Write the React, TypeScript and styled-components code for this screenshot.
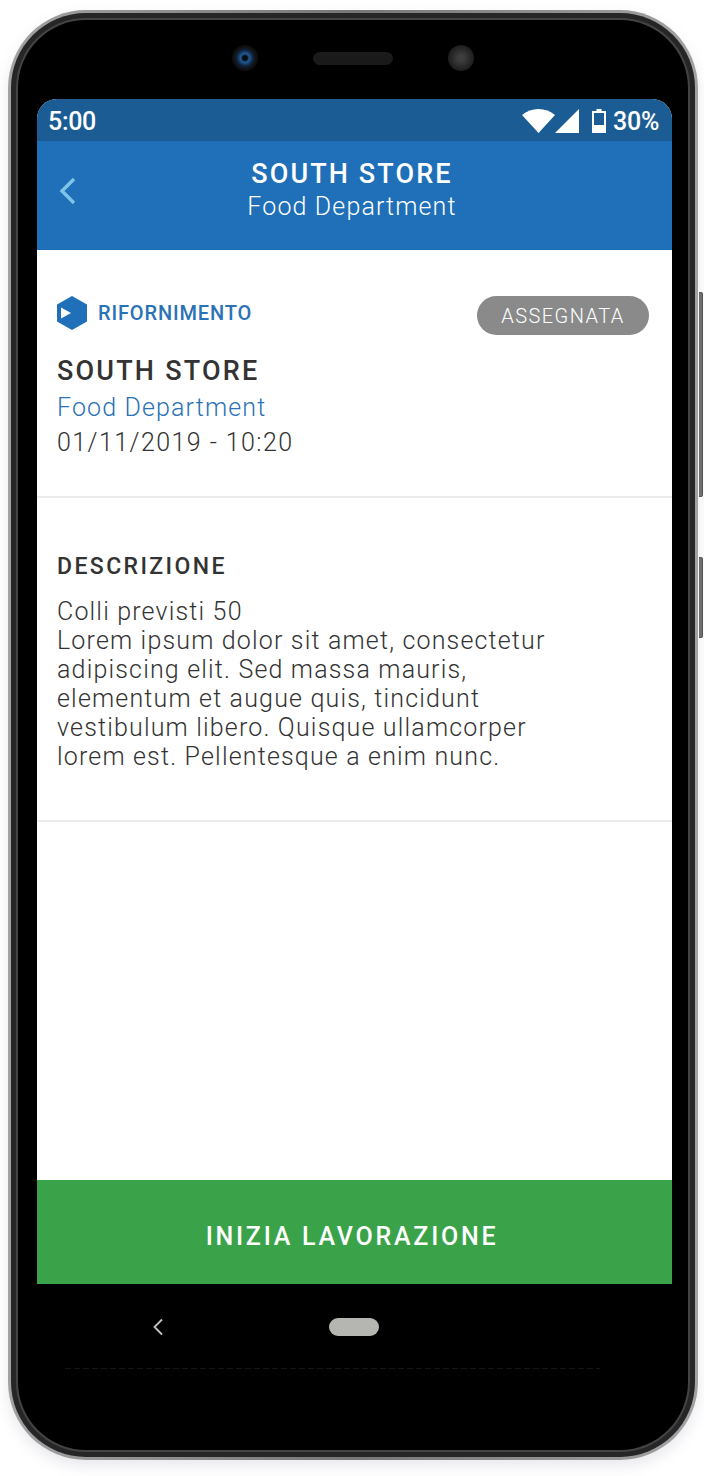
import React from "react";
import styled, { createGlobalStyle } from "styled-components";

const GlobalStyle = createGlobalStyle`
	html, body {
		margin: 0;
		padding: 0;
		background: #fff;
	}
`;

const Page = styled.div`
	width: 704px;
	height: 1476px;
	box-sizing: border-box;
	padding: 10px 0 0 8px;
	overflow: hidden;
	font-family: Roboto, "Liberation Sans", sans-serif;
`;

const Phone = styled.div`
	position: relative;
	width: 690px;
	height: 1450px;
	box-sizing: border-box;
	padding: 3px;
	border-radius: 78px;
	background: linear-gradient(90deg, #a2a2a2 0%, #777 50%, #a2a2a2 100%);
	box-shadow: 0 6px 14px rgba(110, 115, 150, 0.16);
`;

const Rim = styled.div`
	height: 100%;
	box-sizing: border-box;
	padding: 5px;
	border-radius: 75px;
	background: #262626;
`;

const InnerRim = styled.div`
	height: 100%;
	box-sizing: border-box;
	padding: 2px;
	border-radius: 70px;
	background: #444;
`;

const Body = styled.div`
	height: 100%;
	box-sizing: border-box;
	padding: 0 16px 0 19px;
	border-radius: 68px;
	background: #000;
	display: flex;
	flex-direction: column;
`;

const SideButton = styled.div<{ $top: number; $height: number }>`
	position: absolute;
	right: -5px;
	top: ${(p) => p.$top}px;
	width: 3px;
	height: ${(p) => p.$height}px;
	border: 1px solid #555;
	border-left: 0;
	border-radius: 0 2px 2px 0;
	background: #6e6e6e;
`;

const TopBar = styled.div`
	height: 79px;
	flex-shrink: 0;
	display: flex;
	align-items: center;
	padding: 0 0 3px 0;
	box-sizing: border-box;
`;

const Camera = styled.div`
	width: 26px;
	height: 26px;
	margin-left: 195px;
	border-radius: 50%;
	background: radial-gradient(circle, #0c0c0c 0 12%, #1d5c99 24%, #11233a 44%, #0f0f10 62%, #0a0a0a 100%);
`;

const Speaker = styled.div`
	width: 80px;
	height: 13px;
	margin-left: 55px;
	border-radius: 7px;
	background: #1a1a1a;
`;

const Sensor = styled.div`
	width: 26px;
	height: 26px;
	margin-left: 55px;
	border-radius: 50%;
	background: radial-gradient(circle, #3e3e3e 0 15%, #2c2c2c 45%, #1a1a1a 75%, #0c0c0c 100%);
`;

const Screen = styled.div`
	width: 635px;
	height: 1185px;
	flex-shrink: 0;
	border-radius: 20px 20px 0 0;
	overflow: hidden;
	background: #fff;
	display: flex;
	flex-direction: column;
`;

const StatusBar = styled.div`
	height: 42px;
	flex-shrink: 0;
	background: #1c5c94;
	color: #fff;
	display: flex;
	align-items: center;
	justify-content: space-between;
	padding: 2px 13px 0 11px;
	box-sizing: border-box;
	font-size: 25px;
	font-weight: 500;
	letter-spacing: -0.3px;
`;

const StatusIcons = styled.div`
	display: flex;
	align-items: center;
`;

const Percent = styled.span`
	margin-left: 7px;
`;

const Header = styled.div`
	position: relative;
	height: 109px;
	flex-shrink: 0;
	background: #1f70b8;
	color: #fff;
	display: flex;
	flex-direction: column;
	align-items: center;
	padding: 15px 5px 0 0;
	box-sizing: border-box;
`;

const BackButton = styled.div`
	position: absolute;
	left: 21px;
	top: 35px;
	display: flex;
`;

const HeaderTitle = styled.div`
	font-size: 27px;
	line-height: 36px;
	font-weight: 500;
	letter-spacing: 2.1px;
`;

const HeaderSub = styled.div`
	font-size: 25px;
	line-height: 30px;
	font-weight: 300;
	letter-spacing: 1.13px;
`;

const Section = styled.div<{ $height: number }>`
	height: ${(p) => p.$height}px;
	flex-shrink: 0;
	box-sizing: border-box;
	padding: 0 23px 0 20px;
	border-bottom: 2px solid #ececec;
`;

const TagRow = styled.div`
	display: flex;
	justify-content: space-between;
	align-items: flex-start;
	margin-top: 46px;
	height: 39px;
`;

const Tag = styled.div`
	display: flex;
	align-items: center;
	gap: 11px;
	height: 34px;
	font-size: 20px;
	font-weight: 500;
	letter-spacing: 0.85px;
	color: #2a72b5;
`;

const Pill = styled.div`
	width: 172px;
	height: 39px;
	border-radius: 20px;
	background: #8a8a8a;
	color: #fff;
	font-size: 20px;
	font-weight: 300;
	letter-spacing: 1.45px;
	display: flex;
	align-items: center;
	justify-content: center;
`;

const StoreName = styled.div`
	margin-top: 18px;
	font-size: 27px;
	line-height: 36px;
	font-weight: 500;
	letter-spacing: 2.2px;
	color: #333;
`;

const Department = styled.div`
	margin-top: 1px;
	font-size: 25px;
	line-height: 36px;
	font-weight: 300;
	letter-spacing: 1.13px;
	color: #2a72b5;
`;

const DateLine = styled.div`
	font-size: 25px;
	line-height: 33px;
	font-weight: 300;
	letter-spacing: 1.43px;
	color: #333;
`;

const SectionTitle = styled.div`
	margin-top: 54px;
	font-size: 23px;
	line-height: 30px;
	font-weight: 500;
	letter-spacing: 2.4px;
	color: #333;
`;

const Description = styled.div`
	margin-top: 15px;
	font-size: 25px;
	line-height: 29px;
	font-weight: 300;
	letter-spacing: 1.17px;
	color: #333;
`;

const Spacer = styled.div`
	flex: 1;
`;

const ActionButton = styled.div`
	height: 104px;
	flex-shrink: 0;
	box-sizing: border-box;
	background: #3aa34a;
	color: #fff;
	display: flex;
	align-items: center;
	justify-content: center;
	padding: 8px 5px 0 0;
	font-size: 25px;
	font-weight: 500;
	letter-spacing: 2.75px;
`;

const NavBar = styled.div`
	height: 84px;
	flex-shrink: 0;
	display: flex;
	align-items: center;
	padding: 2px 0 0 115px;
	box-sizing: border-box;
`;

const HomePill = styled.div`
	width: 50px;
	height: 18px;
	margin-left: 165px;
	border-radius: 9px;
	background: #b5b5b2;
`;

const NoiseLine = styled.div`
	width: 535px;
	height: 1px;
	margin-left: 28px;
	background: repeating-linear-gradient(90deg, #141414 0 6px, #000 6px 9px);
`;

export default function App() {
	return (
		<>
			<GlobalStyle />
			<Page>
				<Phone>
					<SideButton $top={282} $height={203} />
					<SideButton $top={547} $height={79} />
					<Rim>
						<InnerRim>
							<Body>
								<TopBar>
									<Camera />
									<Speaker />
									<Sensor />
								</TopBar>
								<Screen>
									<StatusBar>
										<span>5:00</span>
										<StatusIcons>
											<svg width="33" height="24" viewBox="0 0 33 24">
												<path d="M0 6 C9 -2 24 -2 33 6 L16.5 24 Z" fill="#fff" />
											</svg>
											<svg width="24" height="24" viewBox="0 0 24 24">
												<path d="M24 0 V24 H0 Z" fill="#fff" />
											</svg>
											<svg width="14" height="24" viewBox="0 0 14 24" style={{ marginLeft: 13 }}>
												<path d="M4.5 0 H9.5 V2 H14 V24 H0 V2 H4.5 Z" fill="#fff" />
												<rect x="2" y="4" width="10" height="12" fill="#1c5c94" />
											</svg>
											<Percent>30%</Percent>
										</StatusIcons>
									</StatusBar>
									<Header>
										<BackButton>
											<svg width="20" height="30" viewBox="0 0 20 30" fill="none">
												<path d="M16 3 L4 15 L16 27" stroke="#7ec4e8" strokeWidth="3.4" />
											</svg>
										</BackButton>
										<HeaderTitle>SOUTH STORE</HeaderTitle>
										<HeaderSub>Food Department</HeaderSub>
									</Header>
									<Section $height={248}>
										<TagRow>
											<Tag>
												<svg width="30" height="34" viewBox="0 0 30 34">
													<path d="M15 0 L30 8.5 V25.5 L15 34 L0 25.5 V8.5 Z" fill="#1f70b8" />
													<path d="M4 11.5 L14 17 L4 22.5 Z" fill="#fff" />
												</svg>
												RIFORNIMENTO
											</Tag>
											<Pill>ASSEGNATA</Pill>
										</TagRow>
										<StoreName>SOUTH STORE</StoreName>
										<Department>Food Department</Department>
										<DateLine>01/11/2019 - 10:20</DateLine>
									</Section>
									<Section $height={324}>
										<SectionTitle>DESCRIZIONE</SectionTitle>
										<Description>
											Colli previsti 50
											<br />
											Lorem ipsum dolor sit amet, consectetur
											<br />
											adipiscing elit. Sed massa mauris,
											<br />
											elementum et augue quis, tincidunt
											<br />
											vestibulum libero. Quisque ullamcorper
											<br />
											lorem est. Pellentesque a enim nunc.
										</Description>
									</Section>
									<Spacer />
									<ActionButton>INIZIA LAVORAZIONE</ActionButton>
								</Screen>
								<NavBar>
									<svg width="12" height="18" viewBox="0 0 12 18" fill="none">
										<path d="M10 1.5 L2.5 9 L10 16.5" stroke="#c4c4c4" strokeWidth="1.8" />
									</svg>
									<HomePill />
								</NavBar>
								<NoiseLine />
							</Body>
						</InnerRim>
					</Rim>
				</Phone>
			</Page>
		</>
	);
}
